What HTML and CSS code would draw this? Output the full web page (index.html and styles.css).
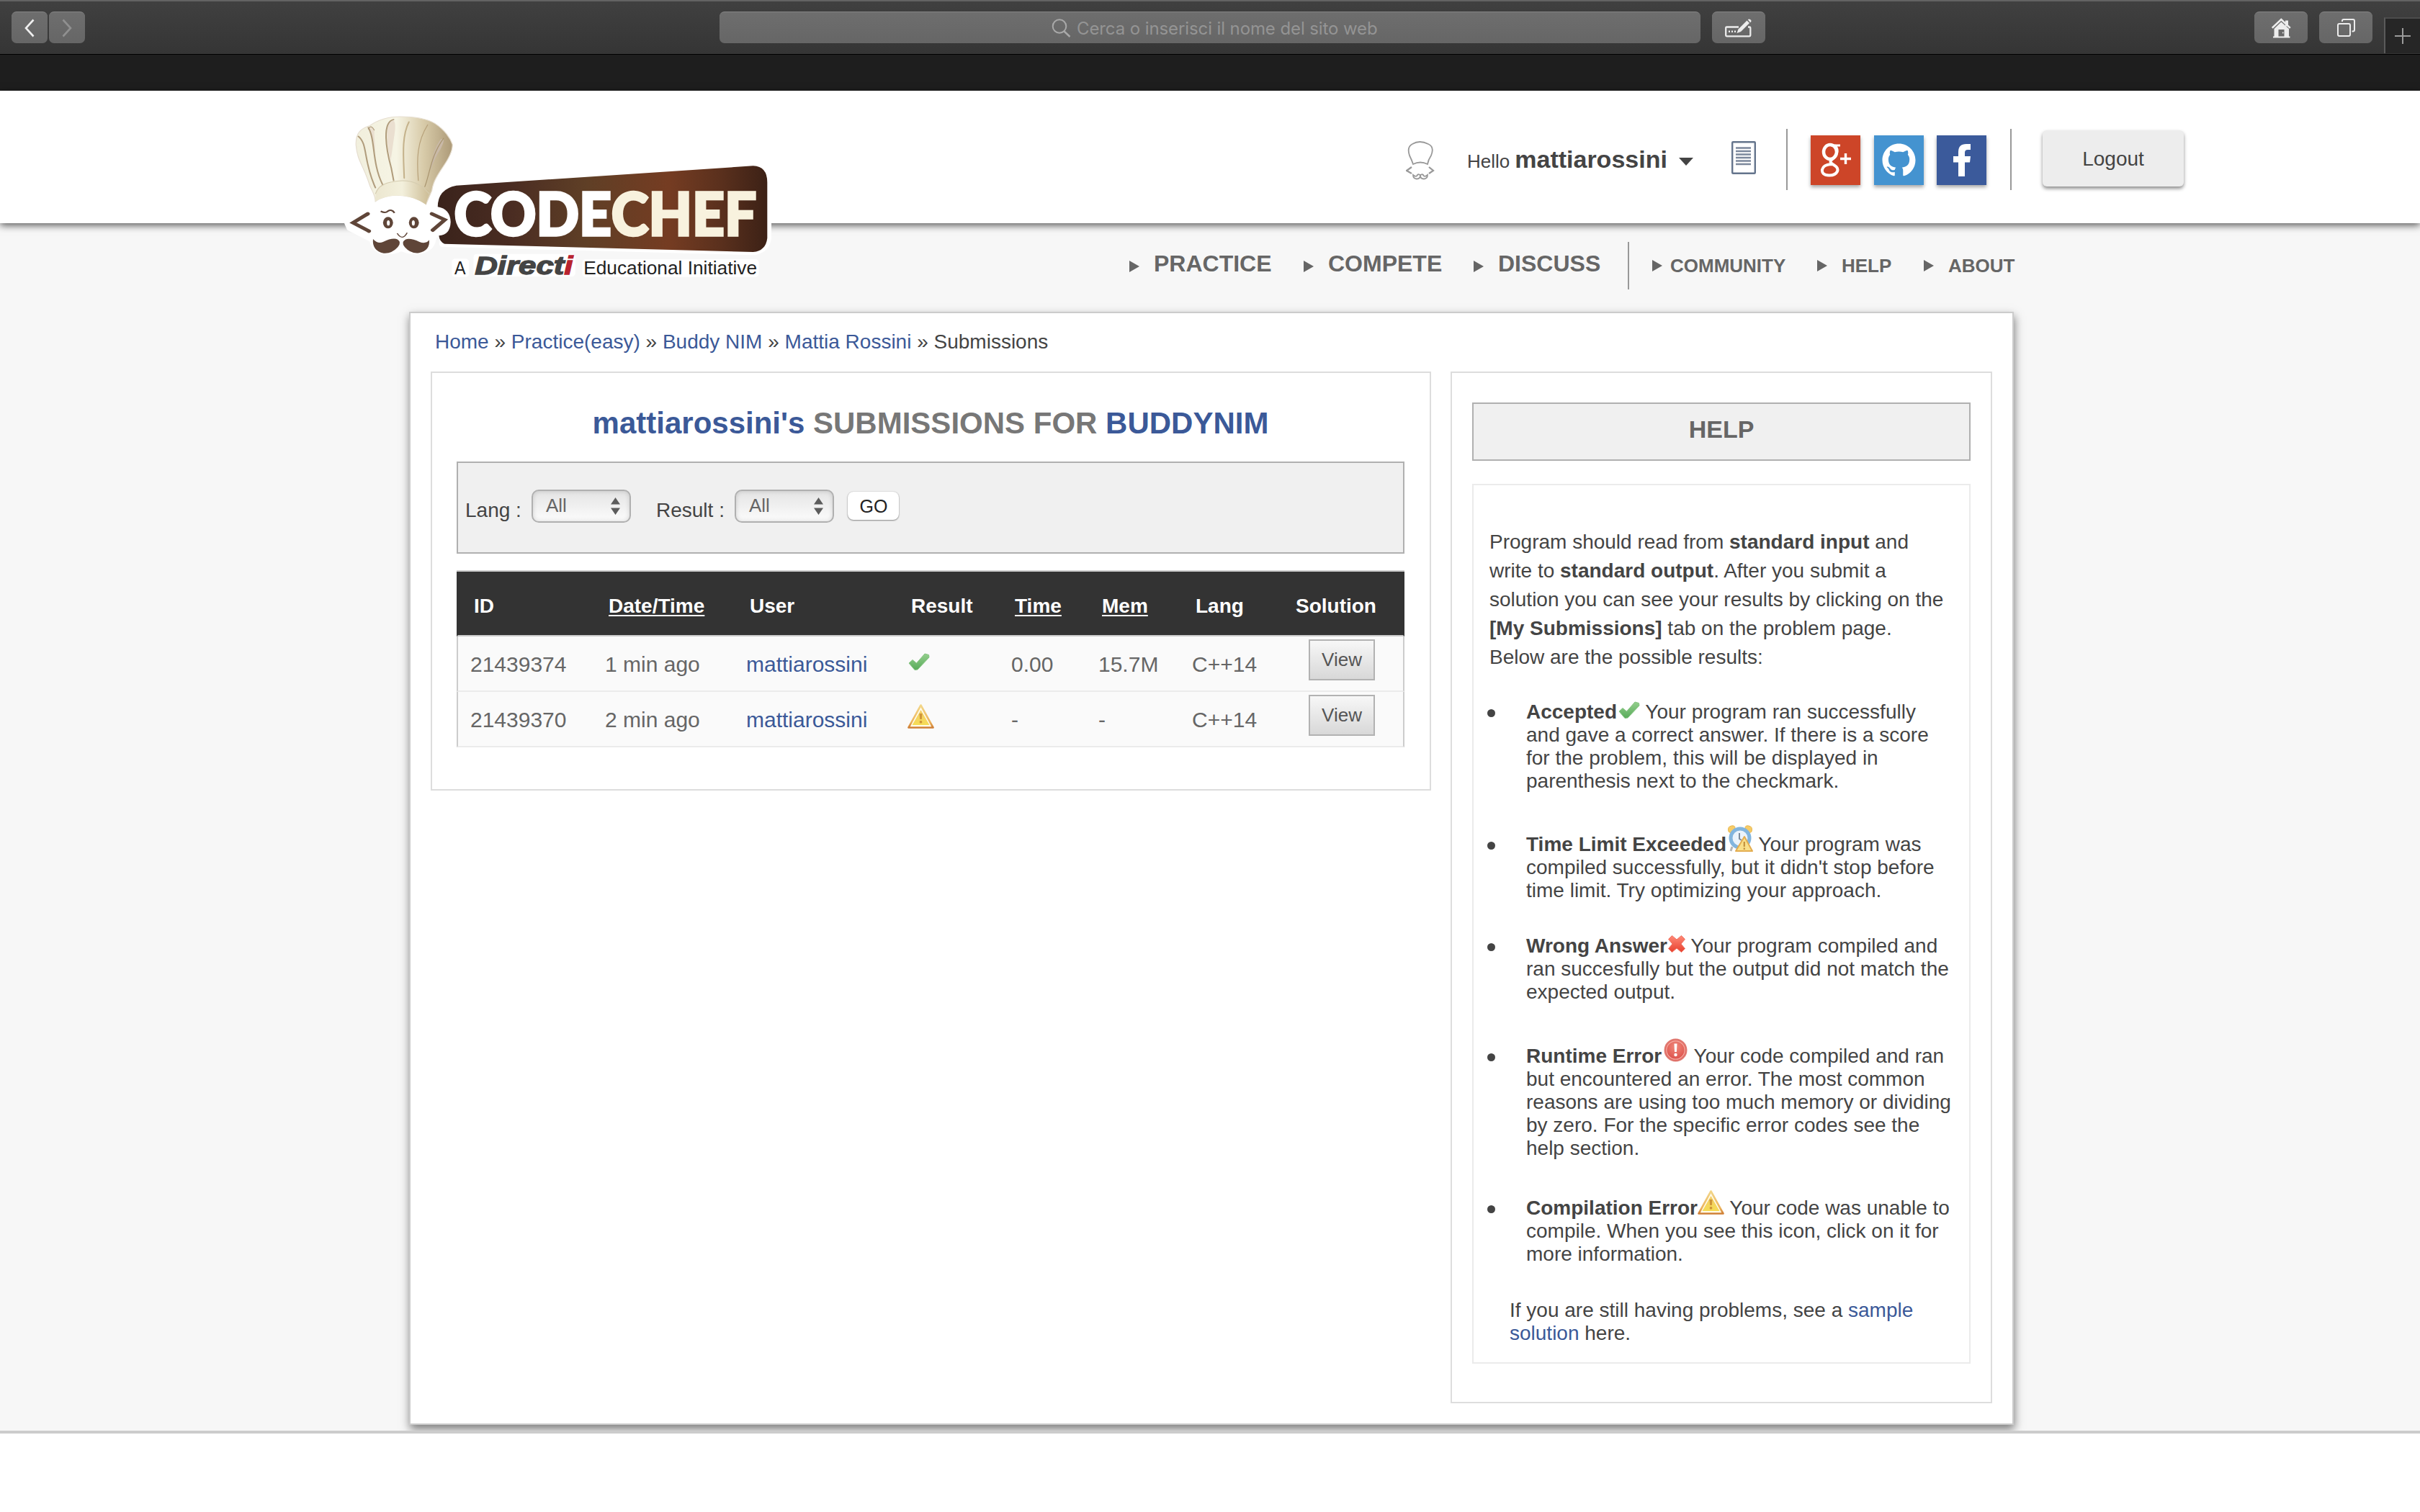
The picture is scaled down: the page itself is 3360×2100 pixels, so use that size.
FILE: index.html
```html
<!DOCTYPE html>
<html lang="en">
<head>
<meta charset="utf-8">
<title>Submissions | CodeChef</title>
<link rel="stylesheet" href="styles.css">
</head>
<body>
<svg class="defs" width="0" height="0" aria-hidden="true">
  <defs>
    <linearGradient id="gWarn" x1="0" y1="0" x2="0" y2="1"><stop offset="0" stop-color="#f3d78a"/><stop offset=".75" stop-color="#ecb35c"/><stop offset="1" stop-color="#cf7f36"/></linearGradient>
    <linearGradient id="gWarnIn" x1="0" y1="0" x2="0" y2="1"><stop offset="0" stop-color="#f3cd6a"/><stop offset="1" stop-color="#f6dc55"/></linearGradient>
    <linearGradient id="gOk" x1="0" y1="0" x2="0" y2="1"><stop offset="0" stop-color="#94cf8d"/><stop offset="1" stop-color="#58ab5a"/></linearGradient>
    <linearGradient id="gBad" x1="0" y1="0" x2="0" y2="1"><stop offset="0" stop-color="#ff8a78"/><stop offset="1" stop-color="#e8402e"/></linearGradient>
    <radialGradient id="gRun" cx=".5" cy=".35" r=".6"><stop offset="0" stop-color="#f08a7c"/><stop offset="1" stop-color="#dc4f49"/></radialGradient>
    <symbol id="ok" viewBox="0 0 30 24"><path d="M1 14 L6 9.500 L11.500 14 L23 1 L28.500 2.500 L29 6 L13 23 L9 23.500 Z" fill="url(#gOk)" stroke="#86c482" stroke-width="1" stroke-linejoin="round"/></symbol>
    <symbol id="warn" viewBox="0 0 37 34"><path d="M18.500 1.500 L35.500 32.500 H1.500 Z" fill="#fffbe9" stroke="url(#gWarn)" stroke-width="2.600" stroke-linejoin="round"/><path d="M18.500 8 L30.500 29 H6.500 Z" fill="url(#gWarnIn)"/><path d="M16.500 13 h4 l-.7 8 h-2.600 Z" fill="#cf9638"/><rect x="16.800" y="23" width="3.400" height="3.400" rx="1" fill="#cf9638"/></symbol>
  </defs>
</svg>

<div class="toolbar">
  <span class="tb-btn back"><svg width="14" height="26" viewBox="0 0 14 26"><path d="M12.500 1.500 L2 13 L12.500 24.500" fill="none" stroke="#efefef" stroke-width="2.600"/></svg></span>
  <span class="tb-btn fwd"><svg width="14" height="26" viewBox="0 0 14 26"><path d="M1.500 1.500 L12 13 L1.500 24.500" fill="none" stroke="#909090" stroke-width="2.600"/></svg></span>
  <div class="address">
    <svg width="27" height="26" viewBox="0 0 27 26"><circle cx="11" cy="10.500" r="9.300" fill="none" stroke="#a9a9a9" stroke-width="2"/><path d="M17.500 17.500 L25.500 25" stroke="#a9a9a9" stroke-width="2.400"/></svg>
    <span class="address-text">Cerca o inserisci il nome del sito web</span>
  </div>
  <span class="tb-btn edit"><svg width="38" height="26" viewBox="0 0 38 26"><path d="M19 11.500 H2.500 Q1.200 11.500 1.200 13 V23 Q1.200 24.300 2.500 24.300 H34 Q35.300 24.300 35.300 23 V13 Q35.300 11.500 34 11.500 H32" fill="none" stroke="#ececec" stroke-width="2.300"/><path d="M16.500 20 L18.500 14.500 L30.500 2.500 L34 6 L22 18 Z M31.800 1.300 Q33 0 35 1 Q37.500 2.500 36 4.500 L35.200 5.200 Z" fill="#ececec"/><path d="M5 17.800h2M9 17.800h2M13 17.800h2" stroke="#ececec" stroke-width="2.600"/></svg></span>
  <span class="tb-btn home"><svg width="27" height="28" viewBox="0 0 27 28"><path d="M13.300 5.500 L3.500 15 V25.500 H2 V27.500 H25.500 V25.500 H24 V15 Z M9.500 16 h8 v9.500 h-8 Z" fill="#ececec" fill-rule="evenodd"/><path d="M.8 13.800 L13.300 2 L25.800 13.800" fill="none" stroke="#ececec" stroke-width="2.500"/><rect x="19" y="3.500" width="4" height="8" fill="#ececec"/><circle cx="15.700" cy="20.500" r=".9" fill="#ececec"/></svg></span>
  <span class="tb-btn tabs"><svg width="25" height="25" viewBox="0 0 25 25" fill="none" stroke="#ececec" stroke-width="2"><rect x="1" y="7" width="17" height="17" rx="2"/><path d="M7 4 V3 Q7 1 9 1 H22 Q24 1 24 3 V15.500 Q24 17.500 22 17.500 H20.500"/></svg></span>
  <span class="new-tab"><svg width="22" height="22" viewBox="0 0 22 22"><path d="M0 11 H22 M11 0 V22" stroke="#9b9b9b" stroke-width="2"/></svg></span>
</div>
<div class="tab-strip"></div>

<header class="header">
  <svg class="logo" width="640" height="280" viewBox="0 0 1568 840" preserveAspectRatio="none">
    <defs>
      <linearGradient id="lBoard" x1="0" y1="0" x2="1" y2="0"><stop offset="0" stop-color="#3a231b"/><stop offset=".22" stop-color="#4a2c22"/><stop offset=".45" stop-color="#5f3f26"/><stop offset=".7" stop-color="#753c22"/><stop offset=".86" stop-color="#5a301d"/><stop offset="1" stop-color="#3c2116"/></linearGradient>
      <linearGradient id="lHat" x1="0" y1="0" x2="1" y2="0"><stop offset="0" stop-color="#f1efdd"/><stop offset=".42" stop-color="#f6f4e4"/><stop offset=".7" stop-color="#d8cba9"/><stop offset="1" stop-color="#ad9a78"/></linearGradient>
      <linearGradient id="lBand" x1="0" y1="0" x2="1" y2="0"><stop offset="0" stop-color="#ece7d0"/><stop offset=".5" stop-color="#f3f0dc"/><stop offset="1" stop-color="#cdbd96"/></linearGradient>
    </defs>
    <g fill="#fff" stroke="#fff" stroke-width="26" stroke-linejoin="round">
      <path d="M150 450 Q230 400 320 460 L340 490 L370 484 Q395 490 394 535 Q392 580 345 590 Q345 650 290 657 Q250 655 238 640 Q220 662 170 655 Q145 640 142 608 L65 560 L56 535 L130 490 Z"/>
      <path d="M425 383 L1440 300 Q1484 310 1484 370 V600 Q1480 650 1440 660 L380 626 Z"/>
    </g>
    <path d="M84 215 C82 165 100 145 130 134 C160 108 195 96 235 96 C290 96 330 108 352 124 C385 150 405 185 412 212 C413 240 400 270 380 305 C355 350 345 375 342 405 L322 462 C290 425 200 405 150 450 C150 420 135 400 130 380 C110 300 88 280 84 215 Z" fill="url(#lHat)" stroke="#e6ded0" stroke-width="3"/>
    <path d="M150 448 Q148 405 165 385 Q240 345 310 385 L332 405 L322 462 Q235 395 150 448 Z" fill="url(#lBand)"/>
    <path d="M150 418 Q160 378 205 368 Q270 352 312 390 L334 418" fill="none" stroke="#d5ccb0" stroke-width="3"/>
    <path d="M200 112 Q222 100 216 160 L202 280 Q184 190 192 130 Z M128 138 Q150 135 146 170 L150 250 Z" fill="#eadfd0"/>
    <path d="M372 190 Q392 180 372 230 Q350 270 338 320 Q342 240 372 190 Z" fill="#c9b9a8"/>
    <g fill="none" stroke="#b09c7c" stroke-width="5" stroke-linecap="round">
      <path d="M92 178 C125 210 108 280 150 392"/><path d="M126 142 C150 190 138 290 174 378"/><path d="M212 108 C172 118 186 230 204 310 L212 362"/><path d="M264 118 C238 180 246 270 248 352" stroke="#c4b28b"/><path d="M328 130 C292 200 290 270 296 362" stroke="#b7a17a" stroke-width="3"/><path d="M382 186 C338 260 336 330 318 388" stroke="#a8946e" stroke-width="3"/><path d="M126 148 Q134 126 146 152" stroke-width="3"/>
    </g>
    <path d="M425 383 L1435 301 Q1483 303 1483 370 V602 Q1478 655 1435 660 L385 626 Q368 618 366 592 Q404 590 406 535 Q404 480 362 472 Q362 398 425 383 Z" fill="url(#lBoard)"/>
    <g fill="none" stroke="#5f4538" stroke-width="14" stroke-linecap="round"><path d="M124 501 L74 538 L128 573"/><path d="M342 501 L386 526 L345 569"/></g>
    <path d="M168 490 Q184 500 192 490 Q206 480 215 497" fill="none" stroke="#5f4538" stroke-width="6"/>
    <g fill="#5f4538"><ellipse cx="193" cy="538" rx="17" ry="24"/><ellipse cx="281" cy="538" rx="17" ry="24"/></g>
    <g fill="#fff"><ellipse cx="194" cy="539" rx="5" ry="11"/><ellipse cx="279" cy="539" rx="5" ry="11"/></g>
    <path d="M224 582 Q242 615 258 580" fill="none" stroke="#5f4538" stroke-width="4"/>
    <path d="M142 606 Q158 628 176 618 Q210 598 226 608 Q240 620 226 640 Q205 668 178 665 Q138 655 142 606 Z M333 610 Q322 628 300 618 Q268 600 252 608 Q236 620 250 640 Q270 668 298 664 Q336 655 333 610 Z" fill="#5f4538"/>
    <g class="logo-name">
      <text x="418" y="590" font-size="246" textLength="1028" lengthAdjust="spacingAndGlyphs" stroke-width="10"><tspan fill="#fff" stroke="#fff">CODE</tspan><tspan fill="#f8f2de" stroke="#f8f2de">CHEF</tspan></text>
    </g>
    <g class="logo-tag">
      <g fill="#fff" stroke="#fff" stroke-width="24" stroke-linejoin="round">
        <rect x="422" y="700" width="34" height="52"/><rect x="496" y="680" width="322" height="70"/><rect x="866" y="702" width="576" height="50"/>
      </g>
      <text x="419" y="752" font-size="80" textLength="38" lengthAdjust="spacingAndGlyphs" fill="#222">A</text>
      <text class="directi" x="488" y="752" font-size="106" textLength="334" lengthAdjust="spacingAndGlyphs" stroke-width="4"><tspan fill="#444" stroke="#444">Direct</tspan><tspan fill="#b8232f" stroke="#b8232f">i</tspan></text>
      <text x="858" y="752" font-size="80" textLength="590" lengthAdjust="spacingAndGlyphs" fill="#222">Educational Initiative</text>
    </g>
  </svg>
  <svg class="chef" width="40" height="54" viewBox="0 0 40 54" fill="none" stroke="#999" stroke-width="1.800"><path d="M10 32 Q8 26 5 20 Q1 8 9 4 Q19 -2 31 4 Q40 8 35 20 Q31 26 30 32 Q20 27 10 32 Z"/><path d="M8 36 L1 41 L8 45 M32 36 L38 41 L32 45" stroke-width="2.200"/><path d="M10 47 q0 5 5 5.500 q5 0 5 -5 q-3 -3 -5 1 q-2 1 -5 -1.500 Z M30 47 q0 5 -5 5.500 q-5 0 -5 -5 q3 -3 5 1 q2 1 5 -1.500 Z"/></svg>
  <div class="hello"><span>Hello</span><b>mattiarossini</b><i class="caret"></i></div>
  <svg class="doc" width="34" height="46" viewBox="0 0 34 46"><rect x="1.200" y="1.200" width="31.600" height="43.600" rx="1" fill="#fff" stroke="#64748c" stroke-width="2.400"/><path d="M6 9.500h21M6 14h21M6 18.500h21M6 23h21M6 27.500h21M6 32h21" stroke="#7c889c" stroke-width="2.600"/></svg>
  <i class="rule"></i>
  <a class="social gplus"><svg width="69" height="69" viewBox="0 0 69 69" fill="none" stroke="#fff"><ellipse cx="27" cy="23" rx="9" ry="10" stroke-width="4.500"/><path d="M28 14 H41" stroke-width="3"/><path d="M33 14 Q38 18 36 25 Q34 30 29 34 Q25 37 32 41 Q39 45 37 50 Q34 56 25 55.500 Q15 55 16 47.500 Q18 40 31 40" stroke-width="4"/><path d="M41 32.500 H56 M48.500 25 V40" stroke-width="3.400"/></svg></a>
  <a class="social github"><svg width="69" height="69" viewBox="0 0 69 69"><g transform="translate(11.500 11.500) scale(2.875)"><path fill="#fff" d="M8 0C3.580 0 0 3.580 0 8c0 3.540 2.290 6.530 5.470 7.590.4.070.55-.17.55-.38 0-.19-.01-.82-.01-1.490-2.010.37-2.530-.49-2.690-.94-.09-.23-.48-.94-.82-1.130-.28-.15-.68-.52-.01-.53.63-.01 1.080.58 1.230.82.72 1.210 1.870.87 2.330.66.07-.52.28-.87.51-1.070-1.780-.2-3.640-.89-3.640-3.950 0-.87.31-1.590.82-2.150-.08-.2-.36-1.020.08-2.120 0 0 .67-.21 2.200.82.64-.18 1.320-.27 2-.27s1.360.09 2 .27c1.530-1.040 2.200-.82 2.200-.82.44 1.100.16 1.920.08 2.120.51.56.82 1.270.82 2.150 0 3.070-1.870 3.750-3.650 3.950.29.25.54.73.54 1.480 0 1.070-.01 1.930-.01 2.200 0 .21.15.46.55.38A8.010 8.010 0 0 0 16 8c0-4.420-3.580-8-8-8z"/></g></svg></a>
  <a class="social facebook"><svg width="69" height="69" viewBox="0 0 69 69"><path fill="#fff" d="M30 57 V37.500 H23 V29 H30 V23 Q30 12 41 12 H47 V20 H43 Q39 20 39 24 V29 H47 L46 37.500 H39 V57 Z"/></svg></a>
  <i class="rule rule2"></i>
  <a class="logout">Logout</a>
</header>

<div class="page">
  <nav class="nav">
    <a class="item big n1"><svg width="14" height="16" viewBox="0 0 14 16"><path d="M0 0 L14 8 L0 16 Z" fill="#666"/></svg><span>PRACTICE</span></a>
    <a class="item big n2"><svg width="14" height="16" viewBox="0 0 14 16"><path d="M0 0 L14 8 L0 16 Z" fill="#666"/></svg><span>COMPETE</span></a>
    <a class="item big n3"><svg width="14" height="16" viewBox="0 0 14 16"><path d="M0 0 L14 8 L0 16 Z" fill="#666"/></svg><span>DISCUSS</span></a>
    <i class="nav-rule"></i>
    <a class="item n4"><svg width="14" height="16" viewBox="0 0 14 16"><path d="M0 0 L14 8 L0 16 Z" fill="#666"/></svg><span>COMMUNITY</span></a>
    <a class="item n5"><svg width="14" height="16" viewBox="0 0 14 16"><path d="M0 0 L14 8 L0 16 Z" fill="#666"/></svg><span>HELP</span></a>
    <a class="item n6"><svg width="14" height="16" viewBox="0 0 14 16"><path d="M0 0 L14 8 L0 16 Z" fill="#666"/></svg><span>ABOUT</span></a>
  </nav>

  <main class="main">
    <div class="crumbs"><a>Home</a> » <a>Practice(easy)</a> » <a>Buddy NIM</a> » <a>Mattia Rossini</a> » Submissions</div>
    <div class="columns">
      <section class="panel submissions">
        <h1><a>mattiarossini's</a> SUBMISSIONS FOR <a>BUDDYNIM</a></h1>
        <div class="filter">
          <label class="l1">Lang :</label>
          <span class="select">All<svg width="13" height="24" viewBox="0 0 13 24"><path d="M0 9.500 L6.500 0 L13 9.500 Z M0 14.500 L6.500 24 L13 14.500 Z" fill="#5c5c5c"/></svg></span>
          <label class="l2">Result :</label>
          <span class="select">All<svg width="13" height="24" viewBox="0 0 13 24"><path d="M0 9.500 L6.500 0 L13 9.500 Z M0 14.500 L6.500 24 L13 14.500 Z" fill="#5c5c5c"/></svg></span>
          <span class="go">GO</span>
        </div>
        <div class="table">
          <div class="row head"><span>ID</span><span><u>Date/Time</u></span><span>User</span><span>Result</span><span><u>Time</u></span><span><u>Mem</u></span><span>Lang</span><span class="sol">Solution</span></div>
          <div class="row"><span>21439374</span><span>1 min ago</span><span><a>mattiarossini</a></span><svg class="r-ok" width="30" height="24"><use href="#ok"/></svg><span>0.00</span><span>15.7M</span><span>C++14</span><a class="view">View</a></div>
          <div class="row"><span>21439370</span><span>2 min ago</span><span><a>mattiarossini</a></span><svg class="r-warn" width="37" height="34"><use href="#warn"/></svg><span>-</span><span>-</span><span>C++14</span><a class="view">View</a></div>
        </div>
      </section>

      <aside class="panel help">
        <h2>HELP</h2>
        <div class="help-body">
          <p class="intro">Program should read from <b>standard input</b> and<br>write to <b>standard output</b>. After you submit a<br>solution you can see your results by clicking on the<br><b>[My Submissions]</b> tab on the problem page.<br>Below are the possible results:</p>
          <ul>
            <li class="i1"><b>Accepted</b><svg class="ico ico-ok" width="30" height="24"><use href="#ok"/></svg> Your program ran successfully<br>and gave a correct answer. If there is a score<br>for the problem, this will be displayed in<br>parenthesis next to the checkmark.</li>
            <li class="i2"><b>Time Limit Exceeded</b><svg class="ico ico-clock" width="36" height="37" viewBox="0 0 36 37"><path d="M2 9 Q0 2 6 1 Q11 0 11 4 L5 11 Z M34 9 Q36 2 30 1 Q25 0 25 4 L31 11 Z" fill="#f7cc68" stroke="#e6b650"/><path d="M7 30 L5 36" stroke="#b5b5b5" stroke-width="3"/><circle cx="18" cy="18" r="13" fill="#eaf3fb" stroke="#82b5de" stroke-width="5"/><path d="M17 11 V19 L20 21" fill="none" stroke="#7b8b9b" stroke-width="2"/><path d="M24 16 L35 36 H12 Z" fill="#f9e08a" stroke="#e3ad50" stroke-width="2" stroke-linejoin="round"/><path d="M23.800 23v7M23.800 31.500v2.500" stroke="#c2913e" stroke-width="2.200"/></svg> Your program was<br>compiled successfully, but it didn't stop before<br>time limit. Try optimizing your approach.</li>
            <li class="i3"><b>Wrong Answer</b><svg class="ico ico-bad" width="24" height="24" viewBox="0 0 24 24"><path d="M5.500 .5 L12 6 L18.500 .5 L23.500 5.500 L18 12 L23.500 18.500 L18.500 23.500 L12 18 L5.500 23.500 L.5 18.500 L6 12 L.5 5.500 Z" fill="url(#gBad)" stroke="#ee7464" stroke-linejoin="round"/></svg> Your program compiled and<br>ran succesfully but the output did not match the<br>expected output.</li>
            <li class="i4"><b>Runtime Error</b><svg class="ico ico-run" width="33" height="33" viewBox="0 0 33 33"><circle cx="16.500" cy="16.500" r="15" fill="url(#gRun)" stroke="#e07a72" stroke-width="2"/><circle cx="16.500" cy="16.500" r="12.700" fill="none" stroke="#f4aaa1" stroke-width="1.300"/><path d="M14.500 7.500 h4 l-.6 11.500 h-2.800 Z" fill="#fff"/><circle cx="16.500" cy="23" r="2.200" fill="#fff"/></svg> Your code compiled and ran<br>but encountered an error. The most common<br>reasons are using too much memory or dividing<br>by zero. For the specific error codes see the<br>help section.</li>
            <li class="i5"><b>Compilation Error</b><svg class="ico ico-warn" width="37" height="34"><use href="#warn"/></svg> Your code was unable to<br>compile. When you see this icon, click on it for<br>more information.</li>
          </ul>
          <p class="outro">If you are still having problems, see a <a>sample<br>solution</a> here.</p>
        </div>
      </aside>
    </div>
  </main>
</div>
</body>
</html>
```

FILE: styles.css
```css
* { box-sizing: border-box; }
body { margin: 0; background: #fff; color: #444; font-family: "Liberation Sans", Arial, sans-serif; font-size: 28px; white-space: nowrap; overflow: hidden; }
h1, h2, p, ul { margin: 0; padding: 0; }
i { display: block; font-style: normal; }
svg { display: block; flex: none; }
.defs { position: absolute; }
a { color: #3b5998; }

/* browser toolbar */
.toolbar { display: flex; align-items: flex-start; height: 76px; padding: 14px 0 0 16px; border-top: 2px solid #636363; border-bottom: 1px solid #000; background: linear-gradient(#404040, #353535); }
.tb-btn { display: flex; align-items: center; justify-content: center; flex: none; width: 74px; height: 44px; border-radius: 7px; background: linear-gradient(#6e6e6e, #666); border-top: 1px solid #868686; }
.back, .fwd { width: 50px; }
.back { margin-right: 2px; }
.address { display: flex; align-items: center; flex: none; gap: 8px; width: 1362px; height: 44px; margin: 0 16px 0 881px; padding-left: 461px; border-radius: 7px; background: linear-gradient(#6e6e6e, #666); border-top: 1px solid #868686; color: #949494; }
.address-text { font: 24px/40px Inter, sans-serif; letter-spacing: -.1px; padding-top: 2px; }
.home { margin: 0 16px 0 679px; }
.new-tab { display: flex; align-items: center; justify-content: center; flex: none; width: 50px; height: 50px; margin: 8px 0 0 16px; border-top: 2px solid #4c4c4c; border-left: 2px solid #5a5a5a; background: #262626; }
.tab-strip { height: 50px; background: #1e1e1e; }

/* site header */
.header { position: relative; z-index: 1; display: flex; align-items: flex-start; height: 184px; background: #fff; box-shadow: 0 3px 10px rgba(0, 0, 0, .65); }
.logo { margin: 4px 0 0 460px; overflow: visible; }
.logo-name { font-family: Lato, sans-serif; font-weight: 900; }
.logo-tag { font-family: "Liberation Sans", sans-serif; }
.directi { font-weight: bold; font-style: italic; }
.chef { margin: 70px 0 0 852px; }
.hello { display: flex; align-items: baseline; flex: none; width: 313px; margin: 75px 0 0 45px; font-size: 26px; line-height: 40px; }
.hello b { margin-left: 7px; font-size: 34px; }
.caret { margin-left: 16px; transform: translateY(-3px); border: 10px solid transparent; border-top: 11px solid #444; border-bottom: 0; }
.doc { margin: 70px 42px 0 54px; }
.rule { flex: none; width: 2px; height: 85px; margin-top: 53px; background: #999; }
.social { flex: none; width: 69px; height: 69px; margin: 62px 0 0 19px; box-shadow: 0 3px 5px rgba(0, 0, 0, .35); }
.gplus { margin-left: 32px; background: #cd4528; }
.github { background: #4493d0; }
.facebook { margin-left: 18px; background: #3b5a9b; }
.rule2 { margin-left: 33px; }
.logout { flex: none; width: 196px; height: 78px; margin: 55px 0 0 43px; padding-top: 2px; border-radius: 6px; background: #ededed; box-shadow: 0 3px 5px rgba(0, 0, 0, .45); color: #444; line-height: 76px; text-align: center; }

/* page body */
.page { height: 1681px; padding-top: 26px; background: #f7f7f7; border-bottom: 4px solid #ccc; overflow: clip; }
.nav { display: flex; height: 66px; padding-left: 1568px; }
.item { display: flex; align-items: center; flex: none; gap: 20px; color: #666; font-weight: bold; font-size: 26px; }
.big { font-size: 32px; }
.big svg { margin-top: 2px; }
.big span { padding-bottom: 5px; }
.n1 { width: 242px; }
.n2 { width: 236px; }
.n3 { width: 214px; }
.n4 { width: 229px; gap: 11px; }
.n5 { width: 148px; }
.nav-rule { width: 2px; height: 66px; margin-right: 32px; background: #999; }

.main { width: 2228px; height: 1546px; margin: 31px 0 0 568px; padding: 20px 28px 0; background: #fff; border: 2px solid #ccc; box-shadow: 1px 6px 12px rgba(0, 0, 0, .5); }
.crumbs { height: 40px; margin-bottom: 21px; padding-left: 6px; line-height: 40px; }
.columns { display: flex; align-items: flex-start; gap: 27px; }
.panel { border: 2px solid #ddd; }
.submissions { width: 1389px; height: 582px; padding: 0 35px 0 34px; }
.submissions h1 { margin: 45px 0 28px; font-size: 42px; line-height: 50px; text-align: center; color: #777; }

.filter { display: flex; align-items: center; height: 128px; background: #f0f0f0; border: 2px solid #b0b0b0; }
.filter label { flex: none; padding-top: 8px; }
.l1 { width: 102px; padding-left: 10px; }
.l2 { width: 144px; padding-left: 35px; }
.select { display: flex; align-items: center; justify-content: space-between; flex: none; width: 138px; height: 46px; margin-bottom: 4px; padding: 0 13px 2px 18px; border: 2px solid #b0b0b0; border-radius: 10px; background: linear-gradient(#e4e4e4, #fcfcfc); box-shadow: inset 0 0 6px rgba(0, 0, 0, .15); color: #666; font-size: 26px; }
.select svg { margin-top: 2px; }
.go { width: 71px; height: 39px; margin: 0 0 5px 19px; padding-left: 1px; border-radius: 8px; background: #fff; box-shadow: 0 1px 2px rgba(0, 0, 0, .4), 0 0 2px rgba(0, 0, 0, .2); color: #222; font-size: 25px; line-height: 40px; text-align: center; }

.table { margin-top: 23px; border-top: 2px solid #ccc; }
.row { display: grid; grid-template-columns: 187px 196px 224px 144px 121px 130px 132px 1fr; align-items: center; height: 77px; padding: 2px 0 0 17px; border: 2px solid #ccc; border-top: 0; border-bottom-color: #ebebeb; background: #fafafa; color: #666; font-size: 30px; }
.head { height: 90px; padding: 7px 0 0 22px; border-color: #333; border-bottom-color: #ccc; background: #333; color: #fff; font-weight: bold; font-size: 28px; }
.head u { text-decoration-thickness: 2px; text-underline-offset: 3px; }
.sol { padding-left: 7px; }
.r-ok { margin: 0 0 7px 1px; }
.r-warn { margin-bottom: 9px; }
.view { width: 92px; height: 57px; margin: 0 0 12px 30px; border: 2px solid #b2b2b2; background: linear-gradient(#f7f7f7, #d8d8d8); color: #555; font-size: 26px; line-height: 53px; text-align: center; }

.help { width: 752px; height: 1433px; padding: 41px 28px 0; }
.help h2 { height: 81px; background: #f0f0f0; border: 2px solid #b0b0b0; color: #666; font-size: 34px; line-height: 71px; text-align: center; }
.help-body { height: 1222px; margin-top: 32px; padding: 59px 0 0 22px; border: 2px solid #ebebeb; }
.intro { line-height: 40px; }
.help-body ul { margin: 40px 0 0 51px; line-height: 32px; list-style: none; }
.help-body li { position: relative; }
.help-body li::before { content: ""; position: absolute; left: -54px; top: 12px; width: 11px; height: 11px; border-radius: 50%; background: #444; }
.i1 { margin-bottom: 56px; }
.i2 { margin-bottom: 45px; }
.i3 { margin-bottom: 57px; }
.i4 { margin-bottom: 51px; }
.i5 { margin-bottom: 46px; }
.ico { display: inline-block; vertical-align: baseline; }
.ico-ok { margin: -24px 0 0 2px; }
.ico-clock { margin: -37px 0 0 1px; position: relative; top: 1px; }
.ico-bad { margin: -24px 0 0 1px; }
.ico-run { margin: -33px 1px 0 3px; position: relative; top: -1px; }
.ico-warn { margin-top: -34px; }
.outro { padding-left: 28px; line-height: 32px; }
```
